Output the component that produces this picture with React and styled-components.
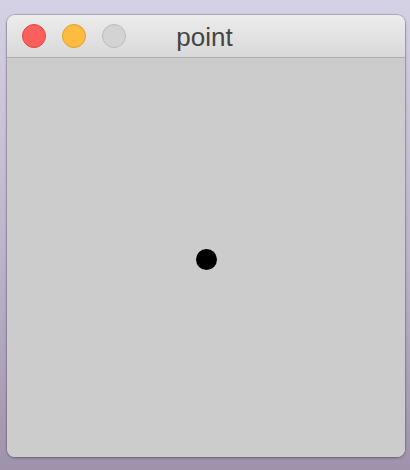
import React from 'react'
import styled, { createGlobalStyle } from 'styled-components'

const GlobalStyle = createGlobalStyle`
  html, body {
    margin: 0;
    padding: 0;
  }
  body {
    font-family: "Liberation Sans", Arial, sans-serif;
  }
`

export const App = () => {
  return (
    <Desktop>
      <GlobalStyle />
      <Window>
        <TitleBar>
          <Lights>
            <Light color="#fc605c" border="#e2463f" />
            <Light color="#fdbc40" border="#dea123" />
            <Light color="#d3d3d3" border="#bcbcbc" />
          </Lights>
          <Title>point</Title>
        </TitleBar>
        <Canvas>
          <Point />
        </Canvas>
      </Window>
    </Desktop>
  )
}

export default App

const Desktop = styled.div`
  width: 410px;
  height: 470px;
  box-sizing: border-box;
  padding: 15px 5px 13px 7px;
  background: linear-gradient(180deg, #d5d1e4 0%, #bdb3cc 55%, #9f93ab 100%);
  display: flex;
`

const Window = styled.div`
  flex: 1;
  display: flex;
  flex-direction: column;
  border-radius: 8px;
  overflow: hidden;
  background: #cccccc;
  box-shadow: 0 1px 3px rgba(60, 50, 70, 0.45), 0 0 0 0.5px rgba(90, 80, 100, 0.5);
`

const TitleBar = styled.div`
  position: relative;
  height: 42px;
  display: flex;
  align-items: center;
  justify-content: center;
  background: linear-gradient(180deg, #ececec 0%, #d9d9d9 100%);
  border-bottom: 1px solid #adadad;
`

const Lights = styled.div`
  position: absolute;
  left: 15px;
  top: 9px;
  display: flex;
  gap: 16px;
`

const Light = styled.span`
  width: 24px;
  height: 24px;
  box-sizing: border-box;
  border-radius: 50%;
  background: ${p => p.color};
  border: 1px solid ${p => p.border};
`

const Title = styled.div`
  font-size: 26px;
  color: #454545;
  padding: 2px 3px 0 0;
`

const Canvas = styled.div`
  flex: 1;
  display: flex;
  align-items: center;
  justify-content: center;
  padding-top: 3px;
  background: #cccccc;
`

const Point = styled.div`
  width: 21px;
  height: 21px;
  border-radius: 50%;
  background: #000;
`
